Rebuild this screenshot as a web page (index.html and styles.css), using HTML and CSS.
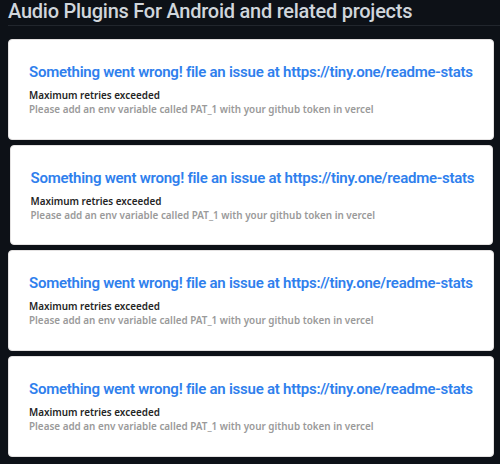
FILE: index.html
```html
<!DOCTYPE html>
<html>
<head>
<meta charset="utf-8">
<link rel="stylesheet" href="styles.css">
</head>
<body>
<div class="page">
  <h2 class="heading">Audio Plugins For Android and related projects</h2>
  <div class="cards">
    <div class="card">
      <div class="card-title">Something went wrong! file an issue at https://tiny.one/readme-stats</div>
      <div class="card-msg">Maximum retries exceeded</div>
      <div class="card-hint">Please add an env variable called PAT_1 with your github token in vercel</div>
    </div>
    <div class="card card-narrow">
      <div class="card-title">Something went wrong! file an issue at https://tiny.one/readme-stats</div>
      <div class="card-msg">Maximum retries exceeded</div>
      <div class="card-hint">Please add an env variable called PAT_1 with your github token in vercel</div>
    </div>
    <div class="card">
      <div class="card-title">Something went wrong! file an issue at https://tiny.one/readme-stats</div>
      <div class="card-msg">Maximum retries exceeded</div>
      <div class="card-hint">Please add an env variable called PAT_1 with your github token in vercel</div>
    </div>
    <div class="card">
      <div class="card-title">Something went wrong! file an issue at https://tiny.one/readme-stats</div>
      <div class="card-msg">Maximum retries exceeded</div>
      <div class="card-hint">Please add an env variable called PAT_1 with your github token in vercel</div>
    </div>
  </div>
</div>
</body>
</html>
```

FILE: styles.css
```css
html, body {
  margin: 0;
  padding: 0;
  background: #0d1117;
}
.page {
  padding: 0 6px 0 8px;
  font-family: "Noto Sans", "DejaVu Sans", sans-serif;
}
.heading {
  margin: 0 -6px 0 0;
  padding: 0;
  font-family: Roboto, "Noto Sans", sans-serif;
  font-size: 20px;
  font-weight: 500;
  letter-spacing: -0.25px;
  line-height: 23px;
  height: 26px;
  box-sizing: border-box;
  color: #d0d6dc;
  border-bottom: 1px solid #21262d;
}
.cards {
  display: flex;
  flex-direction: column;
  gap: 5px;
  margin-top: 13px;
}
.card {
  background: #fff;
  border: 1px solid #e4e2e2;
  border-radius: 4px;
  height: 101px;
  box-sizing: border-box;
  padding: 22px 0 0 20px;
}
.card-narrow {
  margin: 0 1.5px;
  height: 100px;
}
.card-title {
  color: #2f80ed;
  font-family: Roboto, "Noto Sans", sans-serif;
  font-size: 15px;
  font-weight: 600;
  letter-spacing: -0.25px;
  line-height: 20px;
  white-space: nowrap;
}
.card-msg {
  margin-top: 6px;
  color: #252525;
  font-size: 9.9px;
  font-weight: 600;
  line-height: 14px;
}
.card-hint {
  color: #9a9a9a;
  font-size: 9.9px;
  font-weight: 600;
  line-height: 14px;
}
```
